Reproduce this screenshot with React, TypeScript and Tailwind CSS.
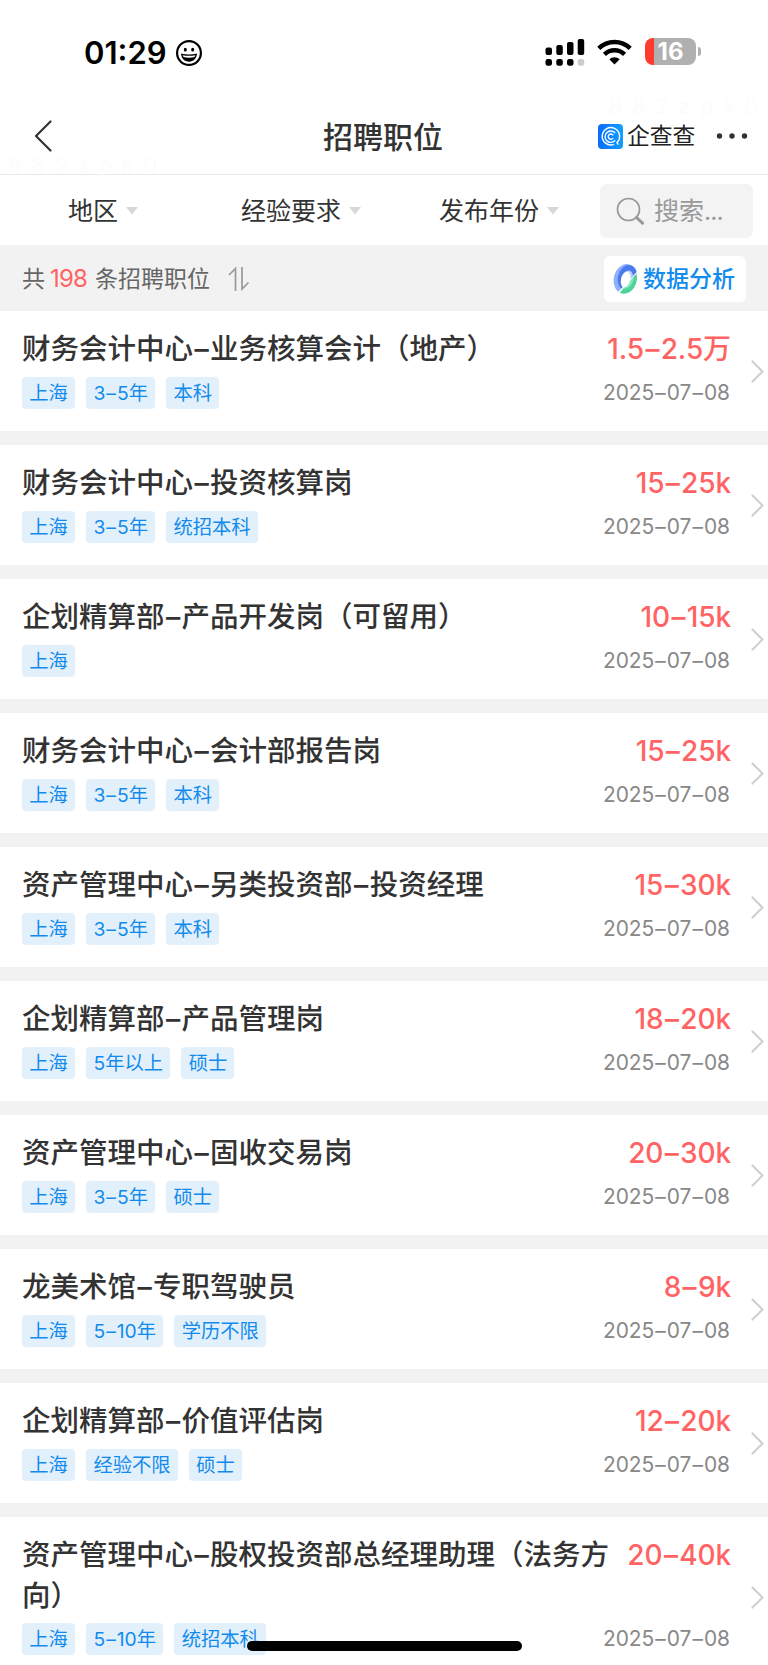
import React from "react";

interface Job {
  title: string;
  salary: string;
  tags: string[];
  date: string;
}

const jobs: Job[] = [
  { title: "财务会计中心–业务核算会计（地产）", salary: "1.5–2.5万", tags: ["上海", "3–5年", "本科"], date: "2025–07–08" },
  { title: "财务会计中心–投资核算岗", salary: "15–25k", tags: ["上海", "3–5年", "统招本科"], date: "2025–07–08" },
  { title: "企划精算部–产品开发岗（可留用）", salary: "10–15k", tags: ["上海"], date: "2025–07–08" },
  { title: "财务会计中心–会计部报告岗", salary: "15–25k", tags: ["上海", "3–5年", "本科"], date: "2025–07–08" },
  { title: "资产管理中心–另类投资部–投资经理", salary: "15–30k", tags: ["上海", "3–5年", "本科"], date: "2025–07–08" },
  { title: "企划精算部–产品管理岗", salary: "18–20k", tags: ["上海", "5年以上", "硕士"], date: "2025–07–08" },
  { title: "资产管理中心–固收交易岗", salary: "20–30k", tags: ["上海", "3–5年", "硕士"], date: "2025–07–08" },
  { title: "龙美术馆–专职驾驶员", salary: "8–9k", tags: ["上海", "5–10年", "学历不限"], date: "2025–07–08" },
  { title: "企划精算部–价值评估岗", salary: "12–20k", tags: ["上海", "经验不限", "硕士"], date: "2025–07–08" },
  { title: "资产管理中心–股权投资部总经理助理（法务方向）", salary: "20–40k", tags: ["上海", "5–10年", "统招本科"], date: "2025–07–08" },
];

// Gives every en dash a little room on both sides
const Dashed = ({ text }: { text: string }) => (
  <>
    {text.split("–").map((part, index) => (
      <React.Fragment key={index}>
        {index > 0 && <span className="mx-[0.05em]">–</span>}
        {part}
      </React.Fragment>
    ))}
  </>
);

const StatusBar = () => (
  <div className="flex h-[98px] items-start justify-between pl-[84px] pr-[67px] pt-[37px]">
    <div className="flex h-[31px] items-center">
      <span className="w-[92px] text-[31px] leading-none font-semibold text-black">01:29</span>
      <svg className="block h-[26px] w-[26px]" viewBox="0 0 26 26" fill="none">
        <circle cx="13" cy="13" r="11.900" stroke="#000" strokeWidth="2.200" />
        <ellipse cx="9.300" cy="9.700" rx="1.500" ry="1.900" fill="#000" />
        <ellipse cx="16.700" cy="9.700" rx="1.500" ry="1.900" fill="#000" />
        <path d="M5 13.500c5 1.300 11 1.300 16 0c-.4 5-3.500 8.200-8 8.200s-7.600-3.200-8-8.200z" fill="#000" />
        <path d="M6.700 15.200c4 .8 8.600.8 12.600 0c-.2.800-.5 1.400-.9 1.900c-3.400.7-7.400.7-10.800 0c-.4-.5-.7-1.100-.9-1.900z" fill="#fff" />
      </svg>
    </div>
    <div className="flex h-[29px] items-center">
      <svg className="block h-[28px] w-[40px]" viewBox="0 0 40 28" fill="#000">
        <rect x="0.500" y="9.500" width="6.500" height="7.500" rx="2" />
        <rect x="11.300" y="7" width="6.500" height="10" rx="2" />
        <rect x="22" y="4" width="6.500" height="13" rx="2" />
        <rect x="32.700" y="1" width="6.500" height="16" rx="2" />
        <rect x="0.500" y="21" width="6.500" height="6.800" rx="2.300" />
        <rect x="11.300" y="21" width="6.500" height="6.800" rx="2.300" />
        <rect x="22" y="21" width="6.500" height="6.800" rx="2.300" />
        <rect x="32.700" y="21" width="6.500" height="6.800" rx="2.300" fill="#ccc" />
      </svg>
      <svg className="ml-[12px] block h-[26px] w-[35px]" viewBox="0 0 35 26" fill="none" stroke="#000" strokeWidth="4.400">
        <path d="M1.800 9.400a22.500 22.500 0 0 1 31.400 0" />
        <path d="M7.400 15.300a14.500 14.500 0 0 1 20.200 0" />
        <path d="M12.300 20.200a7.700 7.700 0 0 1 10.400 0l-5.200 5.300z" fill="#000" stroke="none" />
      </svg>
      <div className="ml-[13px] flex h-[27px] w-[51px] items-center justify-center rounded-[8px] bg-[linear-gradient(90deg,#ff3b30_9px,#b0b0b0_9px)]">
        <span className="text-[24px] leading-[27px] font-bold text-white">16</span>
      </div>
      <div className="ml-[2px] h-[9px] w-[3px] rounded-r-full bg-[#b0b0b0]" />
    </div>
  </div>
);

const NavBar = () => (
  <div className="flex h-[77px] items-center border-b border-[#e8e8e8] pr-[18px] pl-[33px]">
    <svg className="block h-[34px] w-[20px]" viewBox="0 0 20 34" fill="none" stroke="#333" strokeWidth="2.200" strokeLinecap="round" strokeLinejoin="round">
      <path d="M17.500 2.500L3 17l14.500 14.500" />
    </svg>
    <h1 className="mt-[1px] ml-[270px] w-[275px] text-[30px] leading-none font-medium text-[#333]">招聘职位</h1>
    <svg className="block h-[25px] w-[25px] shrink-0" viewBox="0 0 25 25" fill="none">
      <defs>
        <linearGradient id="logo" x1="0" y1="0" x2="1" y2="0">
          <stop offset="0" stopColor="#0a6cff" />
          <stop offset="1" stopColor="#10a0ff" />
        </linearGradient>
      </defs>
      <rect width="25" height="25" rx="4" fill="url(#logo)" />
      <g stroke="#fff" strokeWidth="1.400" strokeLinecap="round">
        <path d="M15.500 20.600A8.700 8.700 0 1 1 19 18.500l1 1.700" />
        <path d="M16.700 8.500A5.700 5.700 0 1 0 16.700 16.800" />
        <path d="M14.800 10.900a2.600 2.600 0 1 0 0 3.500" />
      </g>
    </svg>
    <span className="ml-[4px] w-[69px] shrink-0 text-[22.800px] leading-none whitespace-nowrap text-[#222]">企查查</span>
    <svg className="ml-[19px] block h-[6px] w-[34px] shrink-0" viewBox="0 0 34 6" fill="#333">
      <circle cx="4.500" cy="3" r="2.700" />
      <circle cx="17" cy="3" r="2.700" />
      <circle cx="29.500" cy="3" r="2.700" />
    </svg>
  </div>
);

const Filter = ({ label }: { label: string }) => (
  <div className="flex items-center">
    <span className="pt-[2px] text-[25px] leading-none text-[#333]">{label}</span>
    <svg className="ml-[8px] block h-[8px] w-[12px]" viewBox="0 0 12 8" fill="#d8d8d8">
      <path d="M0 0h12L6 7.500z" />
    </svg>
  </div>
);

const FilterBar = () => (
  <div className="flex h-[70px] items-center justify-between pt-[1px] pr-[15px] pl-[68px]">
    <div className="w-[173px]">
      <Filter label="地区" />
    </div>
    <div className="w-[198px]">
      <Filter label="经验要求" />
    </div>
    <div className="flex-1">
      <Filter label="发布年份" />
    </div>
    <div className="flex h-[54px] w-[153px] items-center rounded-[7px] bg-[#f3f3f3] pl-[16px]">
      <svg className="block h-[28px] w-[28px]" viewBox="0 0 28 28" fill="none" stroke="#999">
        <circle cx="12.500" cy="12.500" r="11" strokeWidth="1.700" />
        <path d="M20.500 20.500l6 5.700" strokeWidth="3" strokeLinecap="round" />
      </svg>
      <span className="ml-[10px] pt-[1px] text-[25px] leading-none text-[#999]">
        搜索<span className="tracking-[-1px]">...</span>
      </span>
    </div>
  </div>
);

const DonutIcon = () => (
  <svg className="block h-[30px] w-[25px]" viewBox="0 0 25 30">
    <defs>
      <clipPath id="upper">
        <path d="M0 0h25v6.500L5 28H0z" />
      </clipPath>
      <clipPath id="lower">
        <path d="M25 8v22H5.500z" />
      </clipPath>
    </defs>
    <g clipPath="url(#upper)">
      <ellipse cx="12.300" cy="15" rx="11.500" ry="15" transform="rotate(12 12.300 15)" fill="#8fb0fb" />
      <ellipse cx="14.500" cy="13.800" rx="9.500" ry="13" transform="rotate(14 14.500 13.800)" fill="#4a7bee" />
      <ellipse cx="14" cy="15.500" rx="5.800" ry="9.300" transform="rotate(16 14 15.500)" fill="#bccffb" />
    </g>
    <g clipPath="url(#lower)">
      <ellipse cx="12.300" cy="15" rx="11.500" ry="14.800" transform="rotate(12 12.300 15)" fill="#4fd39a" />
      <ellipse cx="13" cy="14.500" rx="7.500" ry="10.500" transform="rotate(16 13 14.500)" fill="#86e6bd" />
    </g>
    <ellipse cx="12.700" cy="15.500" rx="4.600" ry="8" transform="rotate(14 12.700 15.500)" fill="#fff" />
  </svg>
);

const SummaryBar = () => (
  <div className="flex h-[66px] items-center bg-[#f2f2f2] pt-[1px] pr-[22px] pl-[22px] text-[23px] leading-none text-[#666]">
    <span className="pt-[1px]">共</span>
    <span className="mx-[5px] w-[40px] pt-[1px] text-[24px] tracking-[-0.8px] text-[#ff6363]">198</span>
    <span className="pt-[1px]">条招聘职位</span>
    <svg className="ml-[18px] block h-[24px] w-[22px]" viewBox="0 0 22 24" fill="none" stroke="#999" strokeWidth="1.700">
      <path d="M1 8L7.500 1.500V24" />
      <path d="M14 0v22l6.500-6.500" />
    </svg>
    <div className="ml-auto flex h-[46px] w-[142px] items-center rounded-[6px] bg-white pl-[9px]">
      <DonutIcon />
      <span className="ml-[5px] pt-[2px] font-medium whitespace-nowrap text-[#128bed]">数据分析</span>
    </div>
  </div>
);

const JobCard = ({ job }: { job: Job }) => (
  <div className="flex items-center bg-white pr-[4px] pl-[22px]">
    <div className="min-w-0 flex-1 pt-[17px] pb-[22px]">
      <div className="flex items-start justify-between">
        <h2 className="min-w-0 flex-1 text-[28.500px] leading-[41px] font-medium text-[#333]">
          <Dashed text={job.title} />
        </h2>
        <span className="pt-[1px] text-[28px] leading-[41px] font-medium tracking-[-0.100px] whitespace-nowrap text-[#ff6363]">
          <Dashed text={job.salary} />
        </span>
      </div>
      <div className="mt-[7px] flex h-[32px] items-center gap-[11px]">
        {job.tags.map((tag) => (
          <span key={tag} className="flex h-[32px] items-center rounded-[4px] bg-[#e2f0fc] px-[7.300px] pt-[1px] text-[19.300px] leading-none whitespace-nowrap text-[#128bed]">
            <Dashed text={tag} />
          </span>
        ))}
        <span className="mr-[1px] ml-auto text-[20.900px] leading-none text-[#888]">
          <Dashed text={job.date} />
        </span>
      </div>
    </div>
    <svg className="ml-[20px] block h-[23px] w-[13px] shrink-0" viewBox="0 0 13 23" fill="none" stroke="#d0d0d0" strokeWidth="2.200" strokeLinecap="round" strokeLinejoin="round">
      <path d="M1.500 1.500l10 10-10 10" />
    </svg>
  </div>
);

const App: React.FC = () => {
  return (
    <div className="relative h-[1665px] w-[768px] overflow-hidden bg-white font-[Inter,'Noto_Sans_CJK_SC',sans-serif]">
      <span className="absolute top-[149px] left-[8px] text-[22px] tracking-[9.500px] text-[#fcfcfc]">882zpk0</span>
      <span className="absolute top-[90px] left-[609px] text-[22px] tracking-[9.500px] text-[#fcfcfc]">882zpk0</span>

      <StatusBar />
      <NavBar />
      <FilterBar />
      <SummaryBar />

      {/* Job list */}
      <div className="flex flex-col gap-[14px] bg-[#f2f2f2]">
        {jobs.map((job) => (
          <JobCard key={job.title} job={job} />
        ))}
      </div>

      {/* Home indicator */}
      <div className="absolute bottom-[14px] left-[247px] h-[10px] w-[275px] rounded-full bg-black" />
    </div>
  );
};

export default App;
